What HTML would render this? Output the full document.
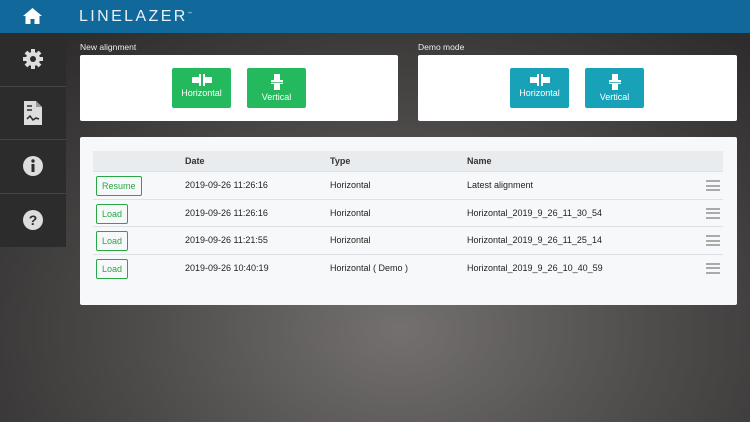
<!DOCTYPE html>
<html><head><style>
*{margin:0;padding:0;box-sizing:border-box}
body{width:750px;height:422px;overflow:hidden;font-family:"Liberation Sans",sans-serif;position:relative;
background:radial-gradient(ellipse 520px 380px at 400px 330px,#747070 0%,#4e4b4b 50%,#2e2c2c 100%)}
.hdr{position:absolute;left:0;top:0;width:750px;height:33px;background:#10699a}
.logo{position:absolute;left:79px;top:8px;color:#e8f1f7;font-size:16px;letter-spacing:2.4px;font-weight:normal}
.side{position:absolute;left:0;top:33px;width:66px;height:214px;background:#2d2c2c}
.si{height:53.5px;border-bottom:1px solid #444;display:flex;align-items:center;justify-content:center}
.lbl{position:absolute;color:#eee;font-size:8.5px}
.card{position:absolute;background:#fff;border-radius:2px}
.btn{position:absolute;width:59px;height:40px;border-radius:2px;color:#fff;font-size:9px;text-align:center}
.g{background:#24b95c}.b{background:#17a2b8}
.btn svg{display:block;margin:6px auto 2px}
.tbl{position:absolute;left:93px;top:151px;width:630px;font-size:9px;color:#222}
.th{height:20px;background:#e9ecef;position:relative;font-weight:bold;color:#333}
.tr{height:27.5px;border-top:1px solid #dee2e6;position:relative}
.tr span,.th span{position:absolute;top:50%;transform:translateY(-50%)}
.ob{position:absolute;left:3px;top:4px;height:20px;border:1px solid #28a745;border-radius:2px;color:#28a745;font-size:9px;padding:0 5px;line-height:18px}
.mn{position:absolute;right:3px;top:8px;width:14px;height:11px;border-top:2px solid #aaa;border-bottom:2px solid #aaa}
.mn i{display:block;height:2px;background:#aaa;margin-top:2.5px}
</style></head><body>
<div class="hdr">
<svg style="position:absolute;left:23px;top:8px" width="19" height="16" viewBox="0 0 19 16"><path d="M9.5 0L0 8h2.5v8h5v-5h4v5h5V8H19z" fill="#fff"/></svg>
<div class="logo">LINELAZER<sup style="font-size:4px">™</sup></div>
</div>
<div class="side">
<div class="si"><svg width="22" height="22" viewBox="0 0 22 22"><circle cx="11" cy="11" r="7" fill="#ddd"/><g stroke="#ddd" stroke-width="4"><path d="M11 1v20M1 11h20M4 4l14 14M18 4L4 18"/></g><circle cx="11" cy="11" r="3" fill="#2d2c2c"/></svg></div>
<div class="si"><svg width="18" height="24" viewBox="0 0 18 24"><path d="M0 0h12l6 6v18H0z" fill="#ddd"/><path d="M12 0v6h6" fill="#999"/><path d="M3 5h5M3 9h5M3 18l3-3 3 4 3-2 3 1" stroke="#2d2c2c" stroke-width="1.5" fill="none"/></svg></div>
<div class="si"><svg width="22" height="22"><circle cx="11" cy="11" r="10" fill="#ddd"/><rect x="9.5" y="9" width="3" height="8" fill="#2d2c2c"/><circle cx="11" cy="6" r="1.7" fill="#2d2c2c"/></svg></div>
<div class="si" style="border:none"><svg width="22" height="22"><circle cx="11" cy="11" r="10" fill="#ddd"/><text x="11" y="16" text-anchor="middle" font-size="14" font-weight="bold" fill="#2d2c2c" font-family="Liberation Sans">?</text></svg></div>
</div>
<div class="lbl" style="left:80px;top:42px">New alignment</div>
<div class="lbl" style="left:418px;top:42px">Demo mode</div>
<div class="card" style="left:80px;top:55px;width:318px;height:66px"></div>
<div class="card" style="left:418px;top:55px;width:319px;height:66px"></div>
<div class="btn g" style="left:172px;top:68px"><svg width="20" height="12" viewBox="0 0 20 12"><path d="M0 3h7V0h2v12H7V9H0zM20 3h-7V0h-2v12h2V9h7z" fill="#fff"/></svg>Horizontal</div>
<div class="btn g" style="left:247px;top:68px"><svg width="12" height="16" viewBox="0 0 12 16"><path d="M3 0h6v6h3v2H0V6h3zM3 16h6v-6h3V8.8H0V10h3z" fill="#fff"/></svg>Vertical</div>
<div class="btn b" style="left:510px;top:68px"><svg width="20" height="12" viewBox="0 0 20 12"><path d="M0 3h7V0h2v12H7V9H0zM20 3h-7V0h-2v12h2V9h7z" fill="#fff"/></svg>Horizontal</div>
<div class="btn b" style="left:585px;top:68px"><svg width="12" height="16" viewBox="0 0 12 16"><path d="M3 0h6v6h3v2H0V6h3zM3 16h6v-6h3V8.8H0V10h3z" fill="#fff"/></svg>Vertical</div>
<div class="card" style="left:80px;top:137px;width:657px;height:168px;background:#f7f8f9"></div>
<div class="tbl">
<div class="th"><span style="left:92px">Date</span><span style="left:237px">Type</span><span style="left:374px">Name</span></div>
<div class="tr"><div class="ob">Resume</div><span style="left:92px">2019-09-26 11:26:16</span><span style="left:237px">Horizontal</span><span style="left:374px">Latest alignment</span><div class="mn"><i></i></div></div>
<div class="tr"><div class="ob">Load</div><span style="left:92px">2019-09-26 11:26:16</span><span style="left:237px">Horizontal</span><span style="left:374px">Horizontal_2019_9_26_11_30_54</span><div class="mn"><i></i></div></div>
<div class="tr"><div class="ob">Load</div><span style="left:92px">2019-09-26 11:21:55</span><span style="left:237px">Horizontal</span><span style="left:374px">Horizontal_2019_9_26_11_25_14</span><div class="mn"><i></i></div></div>
<div class="tr"><div class="ob">Load</div><span style="left:92px">2019-09-26 10:40:19</span><span style="left:237px">Horizontal ( Demo )</span><span style="left:374px">Horizontal_2019_9_26_10_40_59</span><div class="mn"><i></i></div></div>
</div>
</body></html>
